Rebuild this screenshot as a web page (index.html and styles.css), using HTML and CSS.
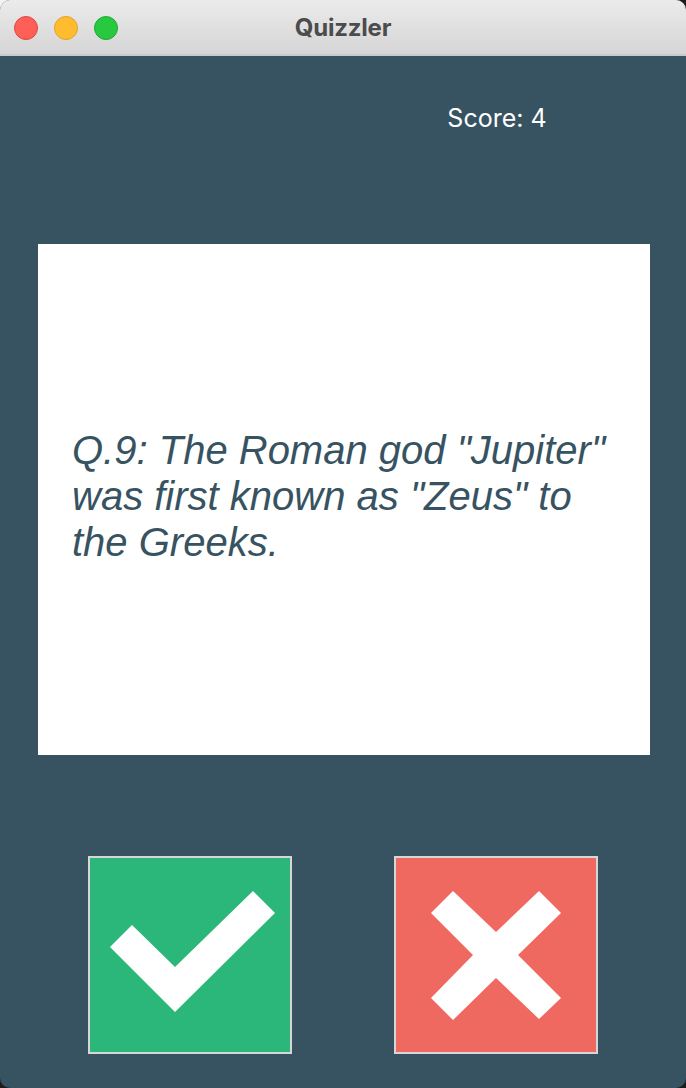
FILE: index.html
```html
<!DOCTYPE html>
<html>
<head>
<meta charset="utf-8">
<title>Quizzler</title>
<link rel="stylesheet" href="styles.css">
</head>
<body>
<div class="window">
  <div class="titlebar">
    <div class="lights">
      <span class="light red"></span>
      <span class="light yellow"></span>
      <span class="light green"></span>
    </div>
    <div class="title">Quizzler</div>
  </div>
  <div class="content">
    <div class="score-row">
      <div></div>
      <div class="score">Score: 4</div>
    </div>
    <div class="card">
      <p class="question">Q.9: The Roman god "Jupiter" was first known as "Zeus" to the Greeks.</p>
    </div>
    <div class="buttons">
      <button class="answer true-btn" aria-label="True">
        <svg viewBox="2 2 200 194" width="200" height="194">
          <polygon points="22,91 44,69 87,111 165,35 187,57 87,156" fill="#ffffff"/>
        </svg>
      </button>
      <button class="answer false-btn" aria-label="False">
        <svg viewBox="2 2 200 194" width="200" height="194">
          <polygon points="59,35 37,57 79,99 37,142 59,164 102,122 145,163 167,142 124,99 167,57 145,35 102,76" fill="#ffffff"/>
        </svg>
      </button>
    </div>
  </div>
</div>
</body>
</html>
```

FILE: styles.css
```css
* {
  box-sizing: border-box;
}

html, body {
  margin: 0;
  padding: 0;
  height: 100%;
}

body {
  background: linear-gradient(#f4f4f4, #f4f4f4) no-repeat 0 0 / 14px 14px, #1c1c1c;
  font-family: "Liberation Sans", Arial, sans-serif;
}

.window {
  width: 686px;
  height: 1088px;
  border-radius: 10px;
  overflow: hidden;
  background: #375362;
  display: flex;
  flex-direction: column;
}

.titlebar {
  position: relative;
  height: 56px;
  flex: 0 0 56px;
  background: linear-gradient(#ebebeb, #d5d5d5);
  border-bottom: 2px solid #c9c9c9;
  display: flex;
  align-items: center;
  justify-content: center;
}

.lights {
  position: absolute;
  left: 14px;
  top: 16px;
  display: flex;
  gap: 16px;
}

.light {
  width: 24px;
  height: 24px;
  border-radius: 50%;
  display: block;
}

.light.red {
  background: #fe5f57;
  border: 1px solid #e2463f;
}

.light.yellow {
  background: #febc2e;
  border: 1px solid #e1a325;
}

.light.green {
  background: #28c840;
  border: 1px solid #1eaa32;
}

.title {
  font-family: Inter, "Liberation Sans", sans-serif;
  font-weight: 700;
  font-size: 24px;
  letter-spacing: -0.2px;
  color: #4c4c4c;
}

.content {
  flex: 1;
  padding: 50px 36px 0 38px;
  display: flex;
  flex-direction: column;
}

.score-row {
  display: grid;
  grid-template-columns: 1fr 1fr;
}

.score {
  font-family: Inter, "Liberation Sans", sans-serif;
  font-size: 25px;
  line-height: 24px;
  color: #ffffff;
  text-align: center;
}

.card {
  margin-top: 114px;
  height: 511px;
  background: #ffffff;
  display: flex;
  align-items: center;
  padding: 0 34px 7px 34px;
}

.question {
  margin: 0;
  font-family: "Liberation Sans", Arial, sans-serif;
  font-style: italic;
  font-size: 40px;
  line-height: 46px;
  color: #375362;
}

.buttons {
  margin: 101px 1px 0 -1px;
  display: grid;
  grid-template-columns: 1fr 1fr;
}

.answer {
  justify-self: center;
  width: 204px;
  height: 198px;
  padding: 0;
  margin: 0;
  border: 2px solid #d6d6d6;
  display: block;
  cursor: pointer;
}

.answer svg {
  display: block;
}

.true-btn {
  background: #2cb77a;
}

.false-btn {
  background: #ef6961;
}
```
